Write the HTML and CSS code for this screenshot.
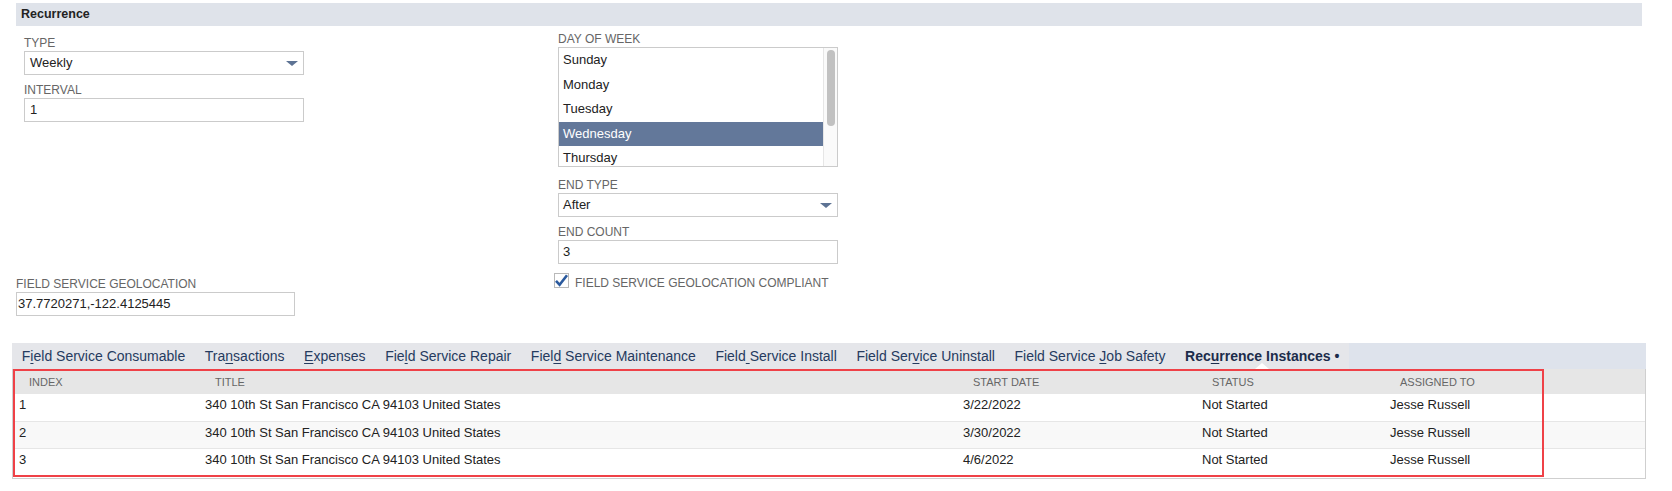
FILE: index.html
```html
<!DOCTYPE html>
<html>
<head>
<meta charset="utf-8">
<title>Recurrence</title>
<link rel="stylesheet" href="styles.css">
</head>
<body>
<div class="page">
  <div class="section-header">Recurrence</div>

  <div class="form">
    <div class="col-left">
      <div class="field">
        <div class="label">TYPE</div>
        <div class="select"><span>Weekly</span><span class="arrow"></span></div>
      </div>
      <div class="field">
        <div class="label">INTERVAL</div>
        <div class="input">1</div>
      </div>
    </div>

    <div class="col-right">
      <div class="field field-list">
        <div class="label">DAY OF WEEK</div>
        <div class="listbox">
          <div class="options">
            <div class="option">Sunday</div>
            <div class="option">Monday</div>
            <div class="option">Tuesday</div>
            <div class="option selected">Wednesday</div>
            <div class="option option-last">Thursday</div>
          </div>
          <div class="scrollbar"><div class="thumb"></div></div>
        </div>
      </div>
      <div class="field">
        <div class="label">END TYPE</div>
        <div class="select"><span>After</span><span class="arrow"></span></div>
      </div>
      <div class="field">
        <div class="label">END COUNT</div>
        <div class="input">3</div>
      </div>
    </div>

    <div class="geo">
      <div class="label">FIELD SERVICE GEOLOCATION</div>
      <div class="input input-geo">37.7720271,-122.4125445</div>
    </div>

    <div class="check">
      <svg class="checkbox" width="16" height="16" viewBox="0 0 16 16">
        <rect x="0.5" y="0.5" width="14" height="14" fill="#fff" stroke="#b9b9b9"/>
        <path d="M2 7.8 L5.6 11.8 L13 2.2" fill="none" stroke="#2b5a9e" stroke-width="2.6" stroke-linecap="butt" stroke-linejoin="miter"/>
      </svg>
      <span class="check-label">FIELD SERVICE GEOLOCATION COMPLIANT</span>
    </div>
  </div>

  <div class="tabs">
    <div class="tab">F<u>i</u>eld Service Consumable</div>
    <div class="tab">Tra<u>n</u>sactions</div>
    <div class="tab"><u>E</u>xpenses</div>
    <div class="tab">Fie<u>l</u>d Service Repair</div>
    <div class="tab">Fiel<u>d</u> Service Maintenance</div>
    <div class="tab">Field<u> </u>Service Install</div>
    <div class="tab">Field Ser<u>v</u>ice Uninstall</div>
    <div class="tab">Field Service <u>J</u>ob Safety</div>
    <div class="tab active">Rec<u>u</u>rrence Instances •</div>
  </div>

  <div class="table-wrap">
    <table class="grid">
      <colgroup>
        <col class="c-index">
        <col class="c-title">
        <col class="c-date">
        <col class="c-status">
        <col class="c-assigned">
      </colgroup>
      <thead>
        <tr>
          <th>INDEX</th>
          <th>TITLE</th>
          <th>START DATE</th>
          <th>STATUS</th>
          <th>ASSIGNED TO</th>
        </tr>
      </thead>
      <tbody>
        <tr>
          <td>1</td>
          <td>340 10th St San Francisco CA 94103 United States</td>
          <td>3/22/2022</td>
          <td>Not Started</td>
          <td>Jesse Russell</td>
        </tr>
        <tr class="alt">
          <td>2</td>
          <td>340 10th St San Francisco CA 94103 United States</td>
          <td>3/30/2022</td>
          <td>Not Started</td>
          <td>Jesse Russell</td>
        </tr>
        <tr>
          <td>3</td>
          <td>340 10th St San Francisco CA 94103 United States</td>
          <td>4/6/2022</td>
          <td>Not Started</td>
          <td>Jesse Russell</td>
        </tr>
      </tbody>
    </table>
    <div class="highlight"></div>
  </div>
</div>
</body>
</html>
```

FILE: styles.css
```css
* {
  box-sizing: border-box;
}

body {
  margin: 0;
  background: #ffffff;
  font-family: "Liberation Sans", Arial, Helvetica, sans-serif;
  color: #222222;
}

.page {
  width: 1672px;
  padding-top: 3px;
}

.section-header {
  margin-left: 16px;
  width: 1626px;
  height: 23px;
  line-height: 23px;
  padding-left: 5px;
  background: #dfe3ea;
  font-size: 12.5px;
  font-weight: bold;
  color: #222222;
}

.form {
  display: grid;
  grid-template-columns: 8px 280px 254px 280px;
  grid-template-rows: auto auto;
  row-gap: 9px;
  align-items: start;
  margin-left: 16px;
  padding-top: 7px;
}

.col-left {
  grid-column: 2;
  grid-row: 1;
  margin-top: 4px;
}

.col-right {
  grid-column: 4;
  grid-row: 1;
}

.geo {
  grid-column: 1 / span 2;
  grid-row: 2;
  width: 279px;
  padding-top: 5px;
}

.check {
  grid-column: 4;
  grid-row: 2;
  display: flex;
  align-items: flex-start;
  margin-left: -4px;
}

.field {
  margin-bottom: 9px;
}

.field:last-child {
  margin-bottom: 0;
}

.field-list {
  margin-bottom: 12px;
}

.label {
  font-size: 12px;
  line-height: 13px;
  margin-bottom: 1px;
  color: #666666;
  white-space: nowrap;
}

.select,
.input {
  height: 24px;
  border: 1px solid #cbcbcb;
  background: #ffffff;
  font-size: 13px;
  line-height: 22px;
  padding-left: 5px;
  color: #222222;
  white-space: nowrap;
}

.col-right .select,
.col-right .input {
  padding-left: 4px;
}

.input-geo {
  padding-left: 1px;
}

.select {
  display: flex;
  justify-content: space-between;
  align-items: center;
  padding-right: 5px;
}

.arrow {
  width: 0;
  height: 0;
  border-left: 6px solid transparent;
  border-right: 6px solid transparent;
  border-top: 5px solid #5d7394;
}

.listbox {
  display: flex;
  height: 120px;
  border: 1px solid #cbcbcb;
  overflow: hidden;
  background: #ffffff;
}

.options {
  flex: 1;
}

.option {
  height: 24.6px;
  line-height: 24.6px;
  padding-left: 4px;
  font-size: 13px;
  color: #222222;
}

.option-last {
  height: 21.6px;
  overflow: hidden;
}

.option.selected {
  background: #63789a;
  color: #ffffff;
}

.scrollbar {
  width: 14px;
  border-left: 1px solid #e6e6e6;
  padding: 2px 2px 0 3px;
  background: #fafafa;
}

.thumb {
  height: 76px;
  border-radius: 4px;
  background: #c1c1c1;
}

.checkbox {
  flex: none;
  display: block;
}

.check-label {
  margin-top: 4px;
  margin-left: 5px;
  font-size: 12px;
  line-height: 13px;
  color: #666666;
  white-space: nowrap;
}

.tabs {
  display: flex;
  margin: 27px 0 0 12px;
  width: 1634px;
  height: 26px;
  background: #dee3ec;
}

.tab {
  padding: 0 9.8px;
  font-size: 14px;
  line-height: 26px;
  color: #263b5f;
  background: #e5e6ea;
  white-space: nowrap;
}

.tab u {
  text-decoration-thickness: 1px;
  text-underline-offset: 2px;
}

.tab.active {
  position: relative;
  font-weight: bold;
  color: #1c2c4b;
}

.tab.active::after {
  content: "";
  position: absolute;
  left: 50%;
  bottom: 0;
  margin-left: -7px;
  border-left: 7px solid transparent;
  border-right: 7px solid transparent;
  border-bottom: 6px solid #ffffff;
}

.table-wrap {
  position: relative;
  margin-left: 12px;
  width: 1634px;
  border: 1px solid #cfcfcf;
  border-top: none;
  padding-bottom: 3px;
}

.grid {
  width: 100%;
  border-collapse: collapse;
  table-layout: fixed;
}

.c-index { width: 186px; }
.c-title { width: 758px; }
.c-date { width: 239px; }
.c-status { width: 188px; }

.grid th {
  height: 25px;
  padding: 0 0 0 16px;
  background: #e6e6e6;
  font-size: 11px;
  font-weight: normal;
  color: #666666;
  text-align: left;
  white-space: nowrap;
}

.grid td {
  height: 27px;
  padding: 0 0 5px 6px;
  border-bottom: 1px solid #e6e6e6;
  font-size: 13px;
  color: #222222;
  white-space: nowrap;
}

.grid tr.alt td {
  background: #f8f8f8;
}

.grid tbody tr:last-child td {
  border-bottom: none;
}

.highlight {
  position: absolute;
  left: 0;
  top: 0;
  width: 1531px;
  height: 108px;
  border: 2px solid #ef4147;
}
```
